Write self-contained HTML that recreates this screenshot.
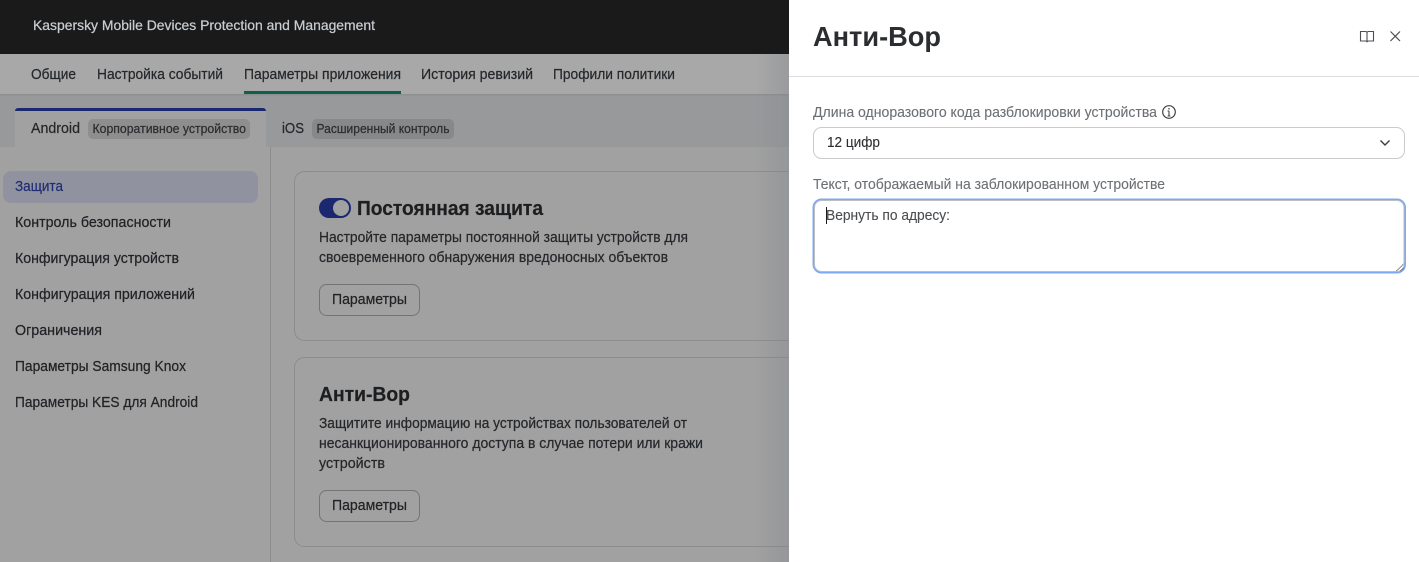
<!DOCTYPE html>
<html lang="ru">
<head>
<meta charset="utf-8">
<title>Анти-Вор</title>
<style>
html,body{margin:0;padding:0;width:1419px;height:562px;overflow:hidden;background:#a1a1a1}
svg{display:block}
text{font-family:"Liberation Sans","Noto Sans CJK SC",sans-serif;white-space:pre;fill:currentColor;stroke:currentColor;stroke-width:.22px}
</style>
</head>
<body>
<svg xmlns="http://www.w3.org/2000/svg" width="1419" height="562" viewBox="0 0 1419 562">
<defs>
<linearGradient id="sh" x1="0" x2="1" y1="0" y2="0">
<stop offset="0" stop-color="#84878b" stop-opacity="0"/>
<stop offset="1" stop-color="#84878b" stop-opacity=".4"/>
</linearGradient>
</defs>
<!-- base -->
<rect x="0" y="0" width="1419" height="562" fill="#a1a1a1"/>
<rect x="0" y="0" width="789" height="54" fill="#1a1a1a"/>
<rect x="0" y="54" width="789" height="40" fill="#a8a8a8"/>
<rect x="0" y="94" width="789" height="1.500" fill="#8e8f8f"/>
<rect x="0" y="95.500" width="789" height="51.500" fill="#98999b"/>
<text x="33" y="30" font-size="14" color="#c9ced3" textLength="342" lengthAdjust="spacingAndGlyphs">Kaspersky Mobile Devices Protection and Management</text>
<!-- nav -->
<g font-size="14.500" color="#25272a">
<text x="31" y="79" textLength="45" lengthAdjust="spacingAndGlyphs">Общие</text>
<text x="97" y="79" textLength="126" lengthAdjust="spacingAndGlyphs">Настройка событий</text>
<text x="244" y="79" textLength="157" lengthAdjust="spacingAndGlyphs">Параметры приложения</text>
<text x="421" y="79" textLength="112" lengthAdjust="spacingAndGlyphs">История ревизий</text>
<text x="553" y="79" textLength="122" lengthAdjust="spacingAndGlyphs">Профили политики</text>
</g>
<rect x="244" y="91" width="157" height="3" fill="#0f604b"/>
<!-- tabs -->
<path d="M15 147V111a3 3 0 0 1 3-3H263a3 3 0 0 1 3 3V147Z" fill="#a1a1a1"/>
<path d="M15 111a3 3 0 0 1 3-3H263a3 3 0 0 1 3 3Z" fill="#1b2870"/>
<text x="31" y="133" font-size="14.500" color="#25272a" textLength="49" lengthAdjust="spacingAndGlyphs">Android</text>
<rect x="88" y="119" width="162" height="20" rx="5" fill="#8e8e8e"/>
<text x="92.500" y="133" font-size="12.500" color="#2a2c2f" textLength="153.500" lengthAdjust="spacingAndGlyphs">Корпоративное устройство</text>
<text x="282" y="133" font-size="14.500" color="#25272a" textLength="22" lengthAdjust="spacingAndGlyphs">iOS</text>
<rect x="312" y="119" width="142" height="20" rx="5" fill="#888889"/>
<text x="316.500" y="133" font-size="12.500" color="#2a2c2f" textLength="133" lengthAdjust="spacingAndGlyphs">Расширенный контроль</text>
<!-- sidebar -->
<rect x="270" y="147" width="1" height="415" fill="#8c8c8c"/>
<rect x="3" y="171" width="255" height="32" rx="8" fill="#90939f"/>
<g font-size="14.500" color="#202225">
<text x="15" y="191" color="#222e74" textLength="48" lengthAdjust="spacingAndGlyphs">Защита</text>
<text x="15" y="227" textLength="156" lengthAdjust="spacingAndGlyphs">Контроль безопасности</text>
<text x="15" y="263" textLength="164" lengthAdjust="spacingAndGlyphs">Конфигурация устройств</text>
<text x="15" y="299" textLength="180" lengthAdjust="spacingAndGlyphs">Конфигурация приложений</text>
<text x="15" y="335" textLength="87" lengthAdjust="spacingAndGlyphs">Ограничения</text>
<text x="15" y="371" textLength="171" lengthAdjust="spacingAndGlyphs">Параметры Samsung Knox</text>
<text x="15" y="407" textLength="183" lengthAdjust="spacingAndGlyphs">Параметры KES для Android</text>
</g>
<!-- card 1 -->
<rect x="294.500" y="171.500" width="520" height="169" rx="10" fill="none" stroke="#8c8c8c"/>
<rect x="319" y="198" width="32" height="20" rx="10" fill="#1b2870"/>
<circle cx="341" cy="208" r="8" fill="#a1a1a1"/>
<text x="357" y="215" font-size="20" font-weight="700" color="#1c1e20" textLength="186" lengthAdjust="spacingAndGlyphs">Постоянная защита</text>
<g font-size="14.500" color="#25272a">
<text x="319" y="242" textLength="369" lengthAdjust="spacingAndGlyphs">Настройте параметры постоянной защиты устройств для</text>
<text x="319" y="262" textLength="349" lengthAdjust="spacingAndGlyphs">своевременного обнаружения вредоносных объектов</text>
</g>
<rect x="319.500" y="284.500" width="100" height="31" rx="7" fill="none" stroke="#747474"/>
<text x="332" y="304" font-size="14.500" color="#202225" textLength="75" lengthAdjust="spacingAndGlyphs">Параметры</text>
<!-- card 2 -->
<rect x="294.500" y="357.500" width="520" height="189" rx="10" fill="none" stroke="#8c8c8c"/>
<text x="319" y="401" font-size="20" font-weight="700" color="#1c1e20" textLength="91" lengthAdjust="spacingAndGlyphs">Анти-Вор</text>
<g font-size="14.500" color="#25272a">
<text x="319" y="428" textLength="368" lengthAdjust="spacingAndGlyphs">Защитите информацию на устройствах пользователей от</text>
<text x="319" y="448" textLength="384" lengthAdjust="spacingAndGlyphs">несанкционированного доступа в случае потери или кражи</text>
<text x="319" y="468" textLength="66" lengthAdjust="spacingAndGlyphs">устройств</text>
</g>
<rect x="319.500" y="490.500" width="100" height="31" rx="7" fill="none" stroke="#747474"/>
<text x="332" y="510" font-size="14.500" color="#202225" textLength="75" lengthAdjust="spacingAndGlyphs">Параметры</text>
<!-- panel shadow -->
<rect x="755" y="54" width="34" height="508" fill="url(#sh)"/>
<!-- panel -->
<rect x="789" y="0" width="630" height="562" fill="#ffffff"/>
<text x="813" y="46" font-size="28" font-weight="700" color="#2b2d30" style="stroke-width:0" textLength="128" lengthAdjust="spacingAndGlyphs">Анти-Вор</text>
<!-- book -->
<path d="M1360.500 31.500H1366L1367 32.300L1368 31.500H1373.500V41H1368L1367 41.800L1366 41H1360.500ZM1367 32.300V41.800" fill="none" stroke="#4c5054" stroke-width="1.100"/>
<!-- close -->
<path d="M1390.500 31.500L1400 41M1400 31.500L1390.500 41" fill="none" stroke="#4c5054" stroke-width="1.200"/>
<rect x="789" y="76" width="630" height="1" fill="#dcdde0"/>
<text x="813" y="117" font-size="14.500" color="#6c7074" style="stroke-width:.1px" textLength="344" lengthAdjust="spacingAndGlyphs">Длина одноразового кода разблокировки устройства</text>
<!-- info -->
<circle cx="1169" cy="112" r="6.300" fill="none" stroke="#3f4347" stroke-width="1.200"/>
<path d="M1169 111V116M1167.600 111H1169M1167.600 116H1170.400" fill="none" stroke="#3f4347" stroke-width="1.100"/>
<circle cx="1169" cy="108.800" r=".8" fill="#3f4347"/>
<!-- select -->
<rect x="813.500" y="127.500" width="591" height="31" rx="8" fill="#fff" stroke="#c9cacc"/>
<text x="827" y="147" font-size="14.500" color="#2b2d30" style="stroke-width:.1px" textLength="53" lengthAdjust="spacingAndGlyphs">12 цифр</text>
<path d="M1380.500 140.500L1385 145L1389.500 140.500" fill="none" stroke="#3a3d40" stroke-width="1.400"/>
<text x="813" y="189" font-size="14.500" color="#6c7074" style="stroke-width:.1px" textLength="352" lengthAdjust="spacingAndGlyphs">Текст, отображаемый на заблокированном устройстве</text>
<!-- textarea -->
<rect x="813.500" y="199.500" width="591.500" height="73" rx="8" fill="#fff" stroke="#7da8f7" stroke-width="2"/>
<rect x="814.500" y="200.500" width="589.500" height="71" rx="7" fill="none" stroke="#bdbec0" stroke-width="1"/>
<text x="826" y="220" font-size="14.500" color="#4a4d50" style="stroke-width:.1px" textLength="124" lengthAdjust="spacingAndGlyphs">Вернуть по адресу:</text>
<rect x="826" y="207" width="1" height="17" fill="#1c1c1c"/>
<path d="M1396.500 271L1403.500 264M1400.500 271L1403.500 268" fill="none" stroke="#555" stroke-width="1" stroke-dasharray="1 .6"/>
</svg>
</body>
</html>
